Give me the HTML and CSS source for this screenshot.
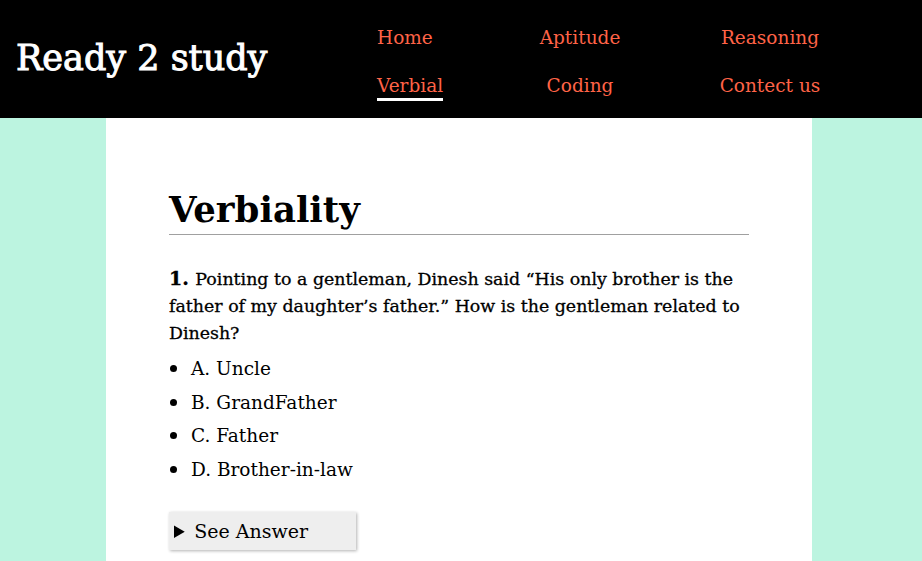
FILE: index.html
```
<!DOCTYPE html>
<html>
<head>
<meta charset="utf-8">
<link rel="stylesheet" href="styles.css">
</head>
<body>
<header class="top">
  <div class="brand">Ready 2 study</div>
  <nav class="nav">
    <a class="link">Home</a>
    <a class="link">Aptitude</a>
    <a class="link">Reasoning</a>
    <a class="link active">Verbial</a>
    <a class="link">Coding</a>
    <a class="link">Contect us</a>
  </nav>
</header>
<main class="page">
  <section class="content">
    <h1 class="title">Verbiality</h1>
    <p class="question"><b class="num">1.</b> Pointing to a gentleman, Dinesh said “His only brother is the father of my daughter’s father.” How is the gentleman related to Dinesh?</p>
    <ul class="options">
      <li>A. Uncle</li>
      <li>B. GrandFather</li>
      <li>C. Father</li>
      <li>D. Brother-in-law</li>
    </ul>
    <details class="answer">
      <summary class="summary">See Answer</summary>
      <p>A. Uncle</p>
    </details>
  </section>
</main>
</body>
</html>
```
FILE: styles.css
```
html, body {
  margin: 0;
  padding: 0;
}
body {
  background: #bcf4e0;
  font-family: "DejaVu Serif", "Liberation Serif", serif;
  color: #000;
  height: 561px;
  overflow: hidden;
}
.top {
  background: #000;
  height: 118px;
  display: flex;
  align-items: center;
}
.brand {
  color: #fff;
  font-size: 35px;
  padding-left: 16px;
  width: 377px;
  box-sizing: border-box;
  padding-bottom: 2px;
  -webkit-text-stroke: 1px #fff;
}
.nav {
  display: grid;
  grid-template-columns: 120px 166px 214px;
  row-gap: 22px;
  justify-items: center;
  padding-top: 5px;
}
.link {
  color: #ff6347;
  font-size: 18.5px;
  line-height: 26px;
}
.link:first-child,
.link.active {
  justify-self: start;
}
.link.active {
  border-bottom: 3px solid #fff;
  line-height: 25px;
  margin-bottom: -2px;
}
.page {
  width: 706px;
  margin-left: 106px;
  background: #fff;
  height: 443px;
  box-sizing: border-box;
  padding: 70px 63px 0 63px;
}
.title {
  margin: 0;
  font-size: 35.5px;
  font-weight: bold;
  line-height: 44px;
  padding-bottom: 2px;
  border-bottom: 1px solid #a0a0a0;
}
.question {
  margin: 30px 0 0 0;
  font-size: 17.4px;
  line-height: 27px;
  -webkit-text-stroke: 0.3px #000;
}
.num {
  font-size: 19px;
  margin-right: 1px;
}
.options {
  margin: 5px 0 0 0;
  padding-left: 22px;
  font-size: 18.5px;
  line-height: 33.5px;
  list-style: none;
}
.options li::before {
  content: "";
  display: inline-block;
  width: 7px;
  height: 7px;
  border-radius: 50%;
  background: #000;
  margin-left: -21px;
  margin-right: 14px;
  vertical-align: 3px;
}
.answer {
  margin-top: 26px;
  width: 187px;
  background: #eeeeee;
  box-shadow: 1px 1px 3px rgba(0,0,0,0.3);
}
.summary {
  font-size: 19px;
  line-height: 38px;
  padding-left: 5px;
  cursor: pointer;
}
```
